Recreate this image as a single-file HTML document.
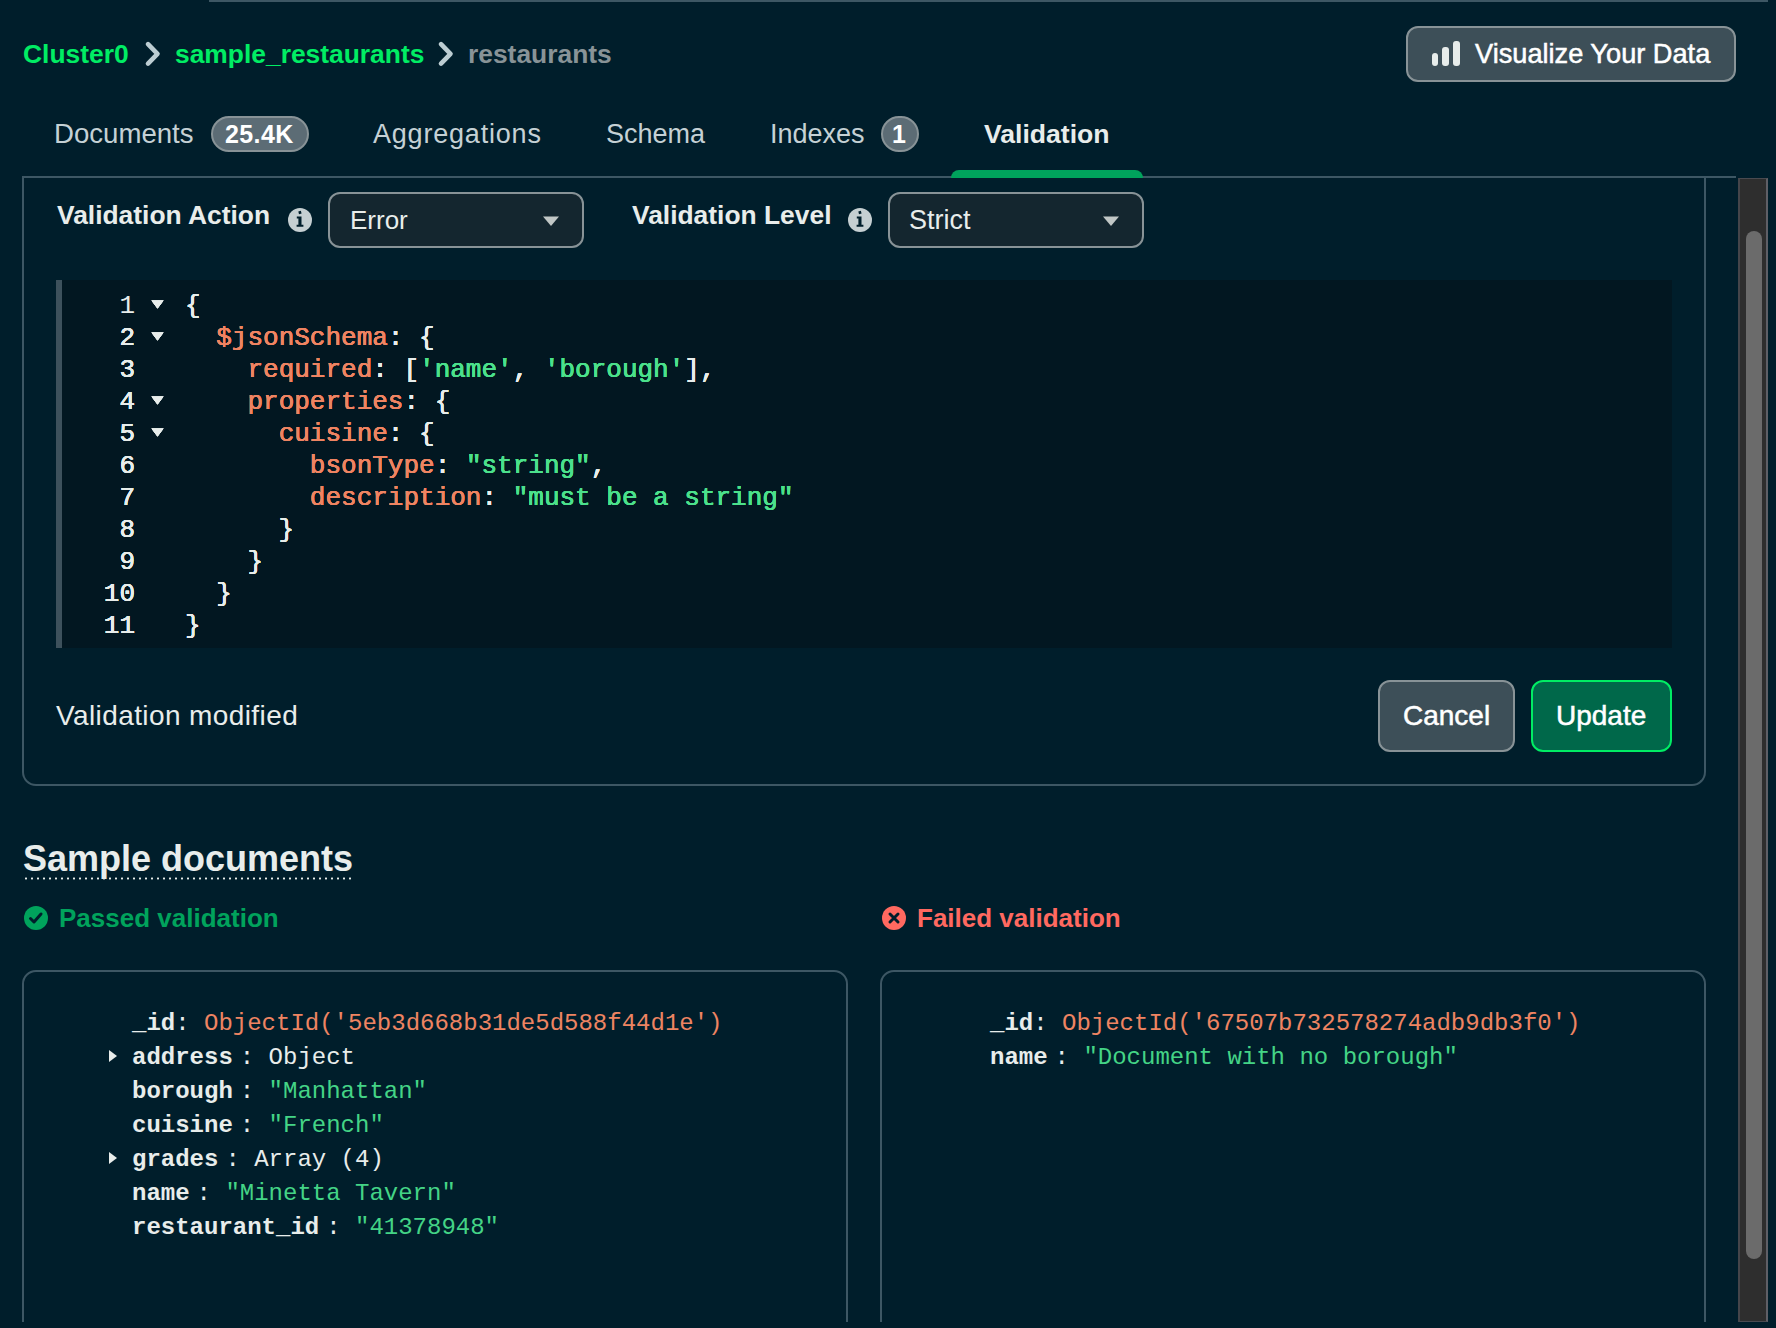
<!DOCTYPE html>
<html><head><meta charset="utf-8">
<style>
html,body{margin:0;padding:0;}
body{width:1776px;height:1328px;background:#001E2B;position:relative;overflow:hidden;font-family:"Liberation Sans",sans-serif;}
.a{position:absolute;}
.t{position:absolute;white-space:pre;line-height:1;}
.b{font-weight:bold;}
.m{font-family:"Liberation Mono",monospace;white-space:pre;}
.orange{color:#EE8462;}
.green{color:#4CE08C;}
.lt{color:#E8EDEB;}
.green2{color:#44D486;}
</style></head>
<body>
<!-- top line -->
<div class="a" style="left:209px;top:0;width:1559px;height:2px;background:#3D5764"></div>

<!-- breadcrumb -->
<div class="t b" style="left:23px;top:41px;font-size:26.4px;color:#00ED64">Cluster0</div>
<svg class="a" style="left:143px;top:40px" width="20" height="28" viewBox="0 0 20 28"><path d="M5 4.2 L14.5 13.9 L5 23.6" fill="none" stroke="#BCCDD2" stroke-width="4.6" stroke-linecap="round" stroke-linejoin="round"/></svg>
<div class="t b" style="left:175px;top:41px;font-size:26.4px;color:#00ED64">sample_restaurants</div>
<svg class="a" style="left:436px;top:40px" width="20" height="28" viewBox="0 0 20 28"><path d="M5 4.2 L14.5 13.9 L5 23.6" fill="none" stroke="#BCCDD2" stroke-width="4.6" stroke-linecap="round" stroke-linejoin="round"/></svg>
<div class="t b" style="left:468px;top:41px;font-size:26.4px;color:#889397">restaurants</div>

<!-- visualize button -->
<div class="a" style="left:1406px;top:26px;width:326px;height:52px;border:2px solid #889397;border-radius:12px;background:#3D4F58"></div>
<div class="a" style="left:1432px;top:53px;width:6px;height:13px;border-radius:3px;background:#E8EDEB"></div>
<div class="a" style="left:1442px;top:47px;width:7px;height:19px;border-radius:3px;background:#E8EDEB"></div>
<div class="a" style="left:1453px;top:41px;width:7px;height:25px;border-radius:3px;background:#E8EDEB"></div>
<div class="t" style="left:1475px;top:40px;font-size:27.2px;color:#FFFFFF;-webkit-text-stroke:0.5px #FFFFFF">Visualize Your Data</div>

<!-- tabs -->
<div class="t" style="left:54px;top:120px;font-size:27.6px;color:#C5D1D5">Documents</div>
<div class="a" style="left:211px;top:116px;width:94px;height:32px;border:2px solid #889397;border-radius:18px;background:#5C6C75"></div>
<div class="t b" style="left:225px;top:122px;font-size:25px;letter-spacing:0.4px;color:#FFFFFF">25.4K</div>
<div class="t" style="left:373px;top:121px;font-size:27px;letter-spacing:0.8px;color:#C5D1D5">Aggregations</div>
<div class="t" style="left:606px;top:121px;font-size:27px;color:#C5D1D5">Schema</div>
<div class="t" style="left:770px;top:121px;font-size:27px;color:#C5D1D5">Indexes</div>
<div class="a" style="left:881px;top:116px;width:34px;height:32px;border:2px solid #889397;border-radius:18px;background:#5C6C75"></div>
<div class="t b" style="left:892px;top:122px;font-size:25px;color:#FFFFFF">1</div>
<div class="t b" style="left:984px;top:121px;font-size:26.6px;color:#E8EDEB">Validation</div>
<div class="a" style="left:22px;top:176px;width:1714px;height:2px;background:#3D5764"></div>
<div class="a" style="left:951px;top:170px;width:192px;height:8px;border-radius:8px 8px 0 0;background:#00A35C"></div>

<!-- panel -->
<div class="a" style="left:22px;top:176px;width:1680px;height:608px;border:2px solid #3D5764;border-top:none;border-radius:0 0 14px 14px;"></div>


<!-- action row -->
<div class="t b lt" style="left:57px;top:202px;font-size:26.4px">Validation Action</div>
<svg class="a" style="left:287px;top:207px" width="26" height="26" viewBox="0 0 26 26"><circle cx="13" cy="13" r="12" fill="#C5CFD2"/><path d="M11.3 4.6l2.6-0.8l0.7 2.6l-2.6 0.8z" fill="#001E2B"/><path d="M9.8 9.5h4.7v8.3h1.9v2h-6.8v-2h1.8v-6.3h-1.6z" fill="#001E2B"/></svg>
<div class="a" style="left:328px;top:192px;width:252px;height:52px;border:2px solid #889397;border-radius:12px;background:#14262F"></div>
<div class="t lt" style="left:350px;top:207px;font-size:26px">Error</div>
<svg class="a" style="left:542px;top:215px" width="18" height="12" viewBox="0 0 18 12"><path d="M1 1.5h16l-8 9.5z" fill="#C1C7C6"/></svg>

<div class="t b lt" style="left:632px;top:202px;font-size:26.4px">Validation Level</div>
<svg class="a" style="left:847px;top:207px" width="26" height="26" viewBox="0 0 26 26"><circle cx="13" cy="13" r="12" fill="#C5CFD2"/><path d="M11.3 4.6l2.6-0.8l0.7 2.6l-2.6 0.8z" fill="#001E2B"/><path d="M9.8 9.5h4.7v8.3h1.9v2h-6.8v-2h1.8v-6.3h-1.6z" fill="#001E2B"/></svg>
<div class="a" style="left:888px;top:192px;width:252px;height:52px;border:2px solid #889397;border-radius:12px;background:#14262F"></div>
<div class="t lt" style="left:909px;top:207px;font-size:27px">Strict</div>
<svg class="a" style="left:1102px;top:215px" width="18" height="12" viewBox="0 0 18 12"><path d="M1 1.5h16l-8 9.5z" fill="#C1C7C6"/></svg>

<!-- editor -->
<div class="a" style="left:56px;top:280px;width:1616px;height:368px;background:#021721"></div>
<div class="a" style="left:56px;top:280px;width:6px;height:368px;background:#3D515C"></div>
<div id="ed">
<div class="t m" style="left:96px;top:290px;width:39px;text-align:right;font-size:26px;line-height:32px;color:#E8EDEB">1</div>
<svg class="a" style="left:151px;top:300px" width="13" height="9" viewBox="0 0 13 9"><path d="M0.5 0.5h12l-6 8z" fill="#E8EDEB"/></svg>
<div class="t m" style="left:185px;top:290px;font-size:26px;line-height:32px"><span class="lt">{</span></div>
<div class="t m" style="left:96px;top:322px;width:39px;text-align:right;font-size:26px;line-height:32px;color:#E8EDEB">2</div>
<svg class="a" style="left:151px;top:332px" width="13" height="9" viewBox="0 0 13 9"><path d="M0.5 0.5h12l-6 8z" fill="#E8EDEB"/></svg>
<div class="t m" style="left:185px;top:322px;font-size:26px;line-height:32px"><span class="lt">  </span><span class="orange">$jsonSchema</span><span class="lt">: {</span></div>
<div class="t m" style="left:96px;top:354px;width:39px;text-align:right;font-size:26px;line-height:32px;color:#E8EDEB">3</div>
<div class="t m" style="left:185px;top:354px;font-size:26px;line-height:32px"><span class="lt">    </span><span class="orange">required</span><span class="lt">: [</span><span class="green">'name'</span><span class="lt">, </span><span class="green">'borough'</span><span class="lt">],</span></div>
<div class="t m" style="left:96px;top:386px;width:39px;text-align:right;font-size:26px;line-height:32px;color:#E8EDEB">4</div>
<svg class="a" style="left:151px;top:396px" width="13" height="9" viewBox="0 0 13 9"><path d="M0.5 0.5h12l-6 8z" fill="#E8EDEB"/></svg>
<div class="t m" style="left:185px;top:386px;font-size:26px;line-height:32px"><span class="lt">    </span><span class="orange">properties</span><span class="lt">: {</span></div>
<div class="t m" style="left:96px;top:418px;width:39px;text-align:right;font-size:26px;line-height:32px;color:#E8EDEB">5</div>
<svg class="a" style="left:151px;top:428px" width="13" height="9" viewBox="0 0 13 9"><path d="M0.5 0.5h12l-6 8z" fill="#E8EDEB"/></svg>
<div class="t m" style="left:185px;top:418px;font-size:26px;line-height:32px"><span class="lt">      </span><span class="orange">cuisine</span><span class="lt">: {</span></div>
<div class="t m" style="left:96px;top:450px;width:39px;text-align:right;font-size:26px;line-height:32px;color:#E8EDEB">6</div>
<div class="t m" style="left:185px;top:450px;font-size:26px;line-height:32px"><span class="lt">        </span><span class="orange">bsonType</span><span class="lt">: </span><span class="green">"string"</span><span class="lt">,</span></div>
<div class="t m" style="left:96px;top:482px;width:39px;text-align:right;font-size:26px;line-height:32px;color:#E8EDEB">7</div>
<div class="t m" style="left:185px;top:482px;font-size:26px;line-height:32px"><span class="lt">        </span><span class="orange">description</span><span class="lt">: </span><span class="green">"must be a string"</span></div>
<div class="t m" style="left:96px;top:514px;width:39px;text-align:right;font-size:26px;line-height:32px;color:#E8EDEB">8</div>
<div class="t m" style="left:185px;top:514px;font-size:26px;line-height:32px"><span class="lt">      }</span></div>
<div class="t m" style="left:96px;top:546px;width:39px;text-align:right;font-size:26px;line-height:32px;color:#E8EDEB">9</div>
<div class="t m" style="left:185px;top:546px;font-size:26px;line-height:32px"><span class="lt">    }</span></div>
<div class="t m" style="left:96px;top:578px;width:39px;text-align:right;font-size:26px;line-height:32px;color:#E8EDEB">10</div>
<div class="t m" style="left:185px;top:578px;font-size:26px;line-height:32px"><span class="lt">  }</span></div>
<div class="t m" style="left:96px;top:610px;width:39px;text-align:right;font-size:26px;line-height:32px;color:#E8EDEB">11</div>
<div class="t m" style="left:185px;top:610px;font-size:26px;line-height:32px"><span class="lt">}</span></div>
</div>
<svg class="a" style="left:151px;top:300px" width="13" height="9" viewBox="0 0 13 9"><path d="M0.5 0.5h12l-6 8z" fill="#E8EDEB"/></svg>
<div class="t m" style="left:185px;top:290px;font-size:26px;line-height:32px"><span class="lt">{</span></div>
<div class="t m" style="left:96px;top:322px;width:39px;text-align:right;font-size:26px;line-height:32px;color:#E8EDEB">2</div>
<svg class="a" style="left:151px;top:332px" width="13" height="9" viewBox="0 0 13 9"><path d="M0.5 0.5h12l-6 8z" fill="#E8EDEB"/></svg>
<div class="t m" style="left:185px;top:322px;font-size:26px;line-height:32px"><span class="lt">  </span><span class="orange">$jsonSchema</span><span class="lt">: {</span></div>
<div class="t m" style="left:96px;top:354px;width:39px;text-align:right;font-size:26px;line-height:32px;color:#E8EDEB">3</div>
<div class="t m" style="left:185px;top:354px;font-size:26px;line-height:32px"><span class="lt">    </span><span class="orange">required</span><span class="lt">: [</span><span class="green">'name'</span><span class="lt">, </span><span class="green">'borough'</span><span class="lt">],</span></div>
<div class="t m" style="left:96px;top:386px;width:39px;text-align:right;font-size:26px;line-height:32px;color:#E8EDEB">4</div>
<svg class="a" style="left:151px;top:396px" width="13" height="9" viewBox="0 0 13 9"><path d="M0.5 0.5h12l-6 8z" fill="#E8EDEB"/></svg>
<div class="t m" style="left:185px;top:386px;font-size:26px;line-height:32px"><span class="lt">    </span><span class="orange">properties</span><span class="lt">: {</span></div>
<div class="t m" style="left:96px;top:418px;width:39px;text-align:right;font-size:26px;line-height:32px;color:#E8EDEB">5</div>
<svg class="a" style="left:151px;top:428px" width="13" height="9" viewBox="0 0 13 9"><path d="M0.5 0.5h12l-6 8z" fill="#E8EDEB"/></svg>
<div class="t m" style="left:185px;top:418px;font-size:26px;line-height:32px"><span class="lt">      </span><span class="orange">cuisine</span><span class="lt">: {</span></div>
<div class="t m" style="left:96px;top:450px;width:39px;text-align:right;font-size:26px;line-height:32px;color:#E8EDEB">6</div>
<div class="t m" style="left:185px;top:450px;font-size:26px;line-height:32px"><span class="lt">        </span><span class="orange">bsonType</span><span class="lt">: </span><span class="green">"string"</span><span class="lt">,</span></div>
<div class="t m" style="left:96px;top:482px;width:39px;text-align:right;font-size:26px;line-height:32px;color:#E8EDEB">7</div>
<div class="t m" style="left:185px;top:482px;font-size:26px;line-height:32px"><span class="lt">        </span><span class="orange">description</span><span class="lt">: </span><span class="green">"must be a string"</span></div>
<div class="t m" style="left:96px;top:514px;width:39px;text-align:right;font-size:26px;line-height:32px;color:#E8EDEB">8</div>
<div class="t m" style="left:185px;top:514px;font-size:26px;line-height:32px"><span class="lt">      }</span></div>
<div class="t m" style="left:96px;top:546px;width:39px;text-align:right;font-size:26px;line-height:32px;color:#E8EDEB">9</div>
<div class="t m" style="left:185px;top:546px;font-size:26px;line-height:32px"><span class="lt">    }</span></div>
<div class="t m" style="left:96px;top:578px;width:39px;text-align:right;font-size:26px;line-height:32px;color:#E8EDEB">10</div>
<div class="t m" style="left:185px;top:578px;font-size:26px;line-height:32px"><span class="lt">  }</span></div>
<div class="t m" style="left:96px;top:610px;width:39px;text-align:right;font-size:26px;line-height:32px;color:#E8EDEB">11</div>
<div class="t m" style="left:185px;top:610px;font-size:26px;line-height:32px"><span class="lt">}</span></div>
</div>
<svg class="a" style="left:151px;top:300px" width="13" height="9" viewBox="0 0 13 9"><path d="M0.5 0.5h12l-6 8z" fill="#E8EDEB"/></svg>
<div class="t m" style="left:185px;top:290px;font-size:26px;line-height:32px"><span class="lt">{</span></div>
<div class="t m" style="left:96px;top:322px;width:39px;text-align:right;font-size:26px;line-height:32px;color:#E8EDEB">2</div>
<svg class="a" style="left:151px;top:332px" width="13" height="9" viewBox="0 0 13 9"><path d="M0.5 0.5h12l-6 8z" fill="#E8EDEB"/></svg>
<div class="t m" style="left:185px;top:322px;font-size:26px;line-height:32px"><span class="lt">  </span><span class="orange">$jsonSchema</span><span class="lt">: {</span></div>
<div class="t m" style="left:96px;top:354px;width:39px;text-align:right;font-size:26px;line-height:32px;color:#E8EDEB">3</div>
<div class="t m" style="left:185px;top:354px;font-size:26px;line-height:32px"><span class="lt">    </span><span class="orange">required</span><span class="lt">: [</span><span class="green">'name'</span><span class="lt">, </span><span class="green">'borough'</span><span class="lt">],</span></div>
<div class="t m" style="left:96px;top:386px;width:39px;text-align:right;font-size:26px;line-height:32px;color:#E8EDEB">4</div>
<svg class="a" style="left:151px;top:396px" width="13" height="9" viewBox="0 0 13 9"><path d="M0.5 0.5h12l-6 8z" fill="#E8EDEB"/></svg>
<div class="t m" style="left:185px;top:386px;font-size:26px;line-height:32px"><span class="lt">    </span><span class="orange">properties</span><span class="lt">: {</span></div>
<div class="t m" style="left:96px;top:418px;width:39px;text-align:right;font-size:26px;line-height:32px;color:#E8EDEB">5</div>
<svg class="a" style="left:151px;top:428px" width="13" height="9" viewBox="0 0 13 9"><path d="M0.5 0.5h12l-6 8z" fill="#E8EDEB"/></svg>
<div class="t m" style="left:185px;top:418px;font-size:26px;line-height:32px"><span class="lt">      </span><span class="orange">cuisine</span><span class="lt">: {</span></div>
<div class="t m" style="left:96px;top:450px;width:39px;text-align:right;font-size:26px;line-height:32px;color:#E8EDEB">6</div>
<div class="t m" style="left:185px;top:450px;font-size:26px;line-height:32px"><span class="lt">        </span><span class="orange">bsonType</span><span class="lt">: </span><span class="green">"string"</span><span class="lt">,</span></div>
<div class="t m" style="left:96px;top:482px;width:39px;text-align:right;font-size:26px;line-height:32px;color:#E8EDEB">7</div>
<div class="t m" style="left:185px;top:482px;font-size:26px;line-height:32px"><span class="lt">        </span><span class="orange">description</span><span class="lt">: </span><span class="green">"must be a string"</span></div>
<div class="t m" style="left:96px;top:514px;width:39px;text-align:right;font-size:26px;line-height:32px;color:#E8EDEB">8</div>
<div class="t m" style="left:185px;top:514px;font-size:26px;line-height:32px"><span class="lt">      }</span></div>
<div class="t m" style="left:96px;top:546px;width:39px;text-align:right;font-size:26px;line-height:32px;color:#E8EDEB">9</div>
<div class="t m" style="left:185px;top:546px;font-size:26px;line-height:32px"><span class="lt">    }</span></div>
<div class="t m" style="left:96px;top:578px;width:39px;text-align:right;font-size:26px;line-height:32px;color:#E8EDEB">10</div>
<div class="t m" style="left:185px;top:578px;font-size:26px;line-height:32px"><span class="lt">  }</span></div>
<div class="t m" style="left:96px;top:610px;width:39px;text-align:right;font-size:26px;line-height:32px;color:#E8EDEB">11</div>
<div class="t m" style="left:185px;top:610px;font-size:26px;line-height:32px"><span class="lt">}</span></div>
</div>
<svg class="a" style="left:151px;top:300px" width="13" height="9" viewBox="0 0 13 9"><path d="M0.5 0.5h12l-6 8z" fill="#E8EDEB"/></svg>
<div class="t m" style="left:185px;top:290px;font-size:26px;line-height:32px"><span class="lt">{</span></div>
<div class="t m" style="left:96px;top:322px;width:39px;text-align:right;font-size:26px;line-height:32px;color:#E8EDEB">2</div>
<svg class="a" style="left:151px;top:332px" width="13" height="9" viewBox="0 0 13 9"><path d="M0.5 0.5h12l-6 8z" fill="#E8EDEB"/></svg>
<div class="t m" style="left:185px;top:322px;font-size:26px;line-height:32px"><span class="lt">  </span><span class="orange">$jsonSchema</span><span class="lt">: {</span></div>
<div class="t m" style="left:96px;top:354px;width:39px;text-align:right;font-size:26px;line-height:32px;color:#E8EDEB">3</div>
<div class="t m" style="left:185px;top:354px;font-size:26px;line-height:32px"><span class="lt">    </span><span class="orange">required</span><span class="lt">: [</span><span class="green">'name'</span><span class="lt">, </span><span class="green">'borough'</span><span class="lt">],</span></div>
<div class="t m" style="left:96px;top:386px;width:39px;text-align:right;font-size:26px;line-height:32px;color:#E8EDEB">4</div>
<svg class="a" style="left:151px;top:396px" width="13" height="9" viewBox="0 0 13 9"><path d="M0.5 0.5h12l-6 8z" fill="#E8EDEB"/></svg>
<div class="t m" style="left:185px;top:386px;font-size:26px;line-height:32px"><span class="lt">    </span><span class="orange">properties</span><span class="lt">: {</span></div>
<div class="t m" style="left:96px;top:418px;width:39px;text-align:right;font-size:26px;line-height:32px;color:#E8EDEB">5</div>
<svg class="a" style="left:151px;top:428px" width="13" height="9" viewBox="0 0 13 9"><path d="M0.5 0.5h12l-6 8z" fill="#E8EDEB"/></svg>
<div class="t m" style="left:185px;top:418px;font-size:26px;line-height:32px"><span class="lt">      </span><span class="orange">cuisine</span><span class="lt">: {</span></div>
<div class="t m" style="left:96px;top:450px;width:39px;text-align:right;font-size:26px;line-height:32px;color:#E8EDEB">6</div>
<div class="t m" style="left:185px;top:450px;font-size:26px;line-height:32px"><span class="lt">        </span><span class="orange">bsonType</span><span class="lt">: </span><span class="green">"string"</span><span class="lt">,</span></div>
<div class="t m" style="left:96px;top:482px;width:39px;text-align:right;font-size:26px;line-height:32px;color:#E8EDEB">7</div>
<div class="t m" style="left:185px;top:482px;font-size:26px;line-height:32px"><span class="lt">        </span><span class="orange">description</span><span class="lt">: </span><span class="green">"must be a string"</span></div>
<div class="t m" style="left:96px;top:514px;width:39px;text-align:right;font-size:26px;line-height:32px;color:#E8EDEB">8</div>
<div class="t m" style="left:185px;top:514px;font-size:26px;line-height:32px"><span class="lt">      }</span></div>
<div class="t m" style="left:96px;top:546px;width:39px;text-align:right;font-size:26px;line-height:32px;color:#E8EDEB">9</div>
<div class="t m" style="left:185px;top:546px;font-size:26px;line-height:32px"><span class="lt">    }</span></div>
<div class="t m" style="left:96px;top:578px;width:39px;text-align:right;font-size:26px;line-height:32px;color:#E8EDEB">10</div>
<div class="t m" style="left:185px;top:578px;font-size:26px;line-height:32px"><span class="lt">  }</span></div>
<div class="t m" style="left:96px;top:610px;width:39px;text-align:right;font-size:26px;line-height:32px;color:#E8EDEB">11</div>
<div class="t m" style="left:185px;top:610px;font-size:26px;line-height:32px"><span class="lt">}</span></div>
</div>
<svg class="a" style="left:151px;top:300px" width="13" height="9" viewBox="0 0 13 9"><path d="M0.5 0.5h12l-6 8z" fill="#E8EDEB"/></svg>
<div class="t m" style="left:185px;top:290px;font-size:26px;line-height:32px"><span class="lt">{</span></div>
<div class="t m" style="left:96px;top:322px;width:39px;text-align:right;font-size:26px;line-height:32px;color:#E8EDEB">2</div>
<svg class="a" style="left:151px;top:332px" width="13" height="9" viewBox="0 0 13 9"><path d="M0.5 0.5h12l-6 8z" fill="#E8EDEB"/></svg>
<div class="t m" style="left:185px;top:322px;font-size:26px;line-height:32px"><span class="lt">  </span><span class="orange">$jsonSchema</span><span class="lt">: {</span></div>
<div class="t m" style="left:96px;top:354px;width:39px;text-align:right;font-size:26px;line-height:32px;color:#E8EDEB">3</div>
<div class="t m" style="left:185px;top:354px;font-size:26px;line-height:32px"><span class="lt">    </span><span class="orange">required</span><span class="lt">: [</span><span class="green">'name'</span><span class="lt">, </span><span class="green">'borough'</span><span class="lt">],</span></div>
<div class="t m" style="left:96px;top:386px;width:39px;text-align:right;font-size:26px;line-height:32px;color:#E8EDEB">4</div>
<svg class="a" style="left:151px;top:396px" width="13" height="9" viewBox="0 0 13 9"><path d="M0.5 0.5h12l-6 8z" fill="#E8EDEB"/></svg>
<div class="t m" style="left:185px;top:386px;font-size:26px;line-height:32px"><span class="lt">    </span><span class="orange">properties</span><span class="lt">: {</span></div>
<div class="t m" style="left:96px;top:418px;width:39px;text-align:right;font-size:26px;line-height:32px;color:#E8EDEB">5</div>
<svg class="a" style="left:151px;top:428px" width="13" height="9" viewBox="0 0 13 9"><path d="M0.5 0.5h12l-6 8z" fill="#E8EDEB"/></svg>
<div class="t m" style="left:185px;top:418px;font-size:26px;line-height:32px"><span class="lt">      </span><span class="orange">cuisine</span><span class="lt">: {</span></div>
<div class="t m" style="left:96px;top:450px;width:39px;text-align:right;font-size:26px;line-height:32px;color:#E8EDEB">6</div>
<div class="t m" style="left:185px;top:450px;font-size:26px;line-height:32px"><span class="lt">        </span><span class="orange">bsonType</span><span class="lt">: </span><span class="green">"string"</span><span class="lt">,</span></div>
<div class="t m" style="left:96px;top:482px;width:39px;text-align:right;font-size:26px;line-height:32px;color:#E8EDEB">7</div>
<div class="t m" style="left:185px;top:482px;font-size:26px;line-height:32px"><span class="lt">        </span><span class="orange">description</span><span class="lt">: </span><span class="green">"must be a string"</span></div>
<div class="t m" style="left:96px;top:514px;width:39px;text-align:right;font-size:26px;line-height:32px;color:#E8EDEB">8</div>
<div class="t m" style="left:185px;top:514px;font-size:26px;line-height:32px"><span class="lt">      }</span></div>
<div class="t m" style="left:96px;top:546px;width:39px;text-align:right;font-size:26px;line-height:32px;color:#E8EDEB">9</div>
<div class="t m" style="left:185px;top:546px;font-size:26px;line-height:32px"><span class="lt">    }</span></div>
<div class="t m" style="left:96px;top:578px;width:39px;text-align:right;font-size:26px;line-height:32px;color:#E8EDEB">10</div>
<div class="t m" style="left:185px;top:578px;font-size:26px;line-height:32px"><span class="lt">  }</span></div>
<div class="t m" style="left:96px;top:610px;width:39px;text-align:right;font-size:26px;line-height:32px;color:#E8EDEB">11</div>
<div class="t m" style="left:185px;top:610px;font-size:26px;line-height:32px"><span class="lt">}</span></div>
</div>

<!-- footer -->
<div class="t lt" style="left:56px;top:702px;font-size:28px;letter-spacing:0.4px">Validation modified</div>
<div class="a" style="left:1378px;top:680px;width:133px;height:68px;border:2px solid #889397;border-radius:12px;background:#3D4F58"></div>
<div class="t" style="left:1403px;top:702px;font-size:28px;color:#FFFFFF;-webkit-text-stroke:0.5px #FFFFFF">Cancel</div>
<div class="a" style="left:1531px;top:680px;width:137px;height:68px;border:2px solid #00ED64;border-radius:12px;background:#00684A"></div>
<div class="t" style="left:1556px;top:702px;font-size:28px;color:#FFFFFF;-webkit-text-stroke:0.5px #FFFFFF">Update</div>

<!-- sample documents -->
<div class="t b lt" style="left:23px;top:841px;font-size:36px">Sample documents</div>
<div class="a" style="left:23px;top:877px;width:330px;height:3px;background-image:radial-gradient(circle,#E8EDEB 1px,transparent 1.2px);background-size:6px 3px"></div>
<svg class="a" style="left:24px;top:906px" width="24" height="24" viewBox="0 0 24 24"><circle cx="12" cy="12" r="12" fill="#00A35C"/><path d="M6.5 12.5l3.5 3.5l7-8" fill="none" stroke="#001E2B" stroke-width="3" stroke-linecap="round" stroke-linejoin="round"/></svg>
<div class="t b" style="left:59px;top:905px;font-size:26px;color:#00A35C">Passed validation</div>
<svg class="a" style="left:882px;top:906px" width="24" height="24" viewBox="0 0 24 24"><circle cx="12" cy="12" r="12" fill="#FF6960"/><path d="M8 8l8 8M16 8l-8 8" fill="none" stroke="#001E2B" stroke-width="3" stroke-linecap="round"/></svg>
<div class="t b" style="left:917px;top:905px;font-size:26px;color:#FF6960">Failed validation</div>

<!-- doc cards -->
<div class="a" style="left:22px;top:970px;width:822px;height:400px;border:2px solid #3D5764;border-radius:14px;"></div>
<div class="a" style="left:880px;top:970px;width:822px;height:400px;border:2px solid #3D5764;border-radius:14px;"></div>
<div id="docs">
<div class="t m b" style="left:132px;top:1007px;font-size:24px;line-height:34px;color:#E8EDEB">_id</div>
<div class="t m" style="left:175.2px;top:1007px;font-size:24px;line-height:34px;color:#E8EDEB">:</div>
<div class="t m orange" style="left:204.0px;top:1007px;font-size:24px;line-height:34px">ObjectId('5eb3d668b31de5d588f44d1e')</div>
<div class="t m b" style="left:132px;top:1041px;font-size:24px;line-height:34px;color:#E8EDEB">address</div>
<div class="t m" style="left:239.8px;top:1041px;font-size:24px;line-height:34px;color:#E8EDEB">:</div>
<div class="t m lt" style="left:268.6px;top:1041px;font-size:24px;line-height:34px">Object</div>
<svg class="a" style="left:108px;top:1049px" width="10" height="14" viewBox="0 0 10 14"><path d="M1 1v12l8-6z" fill="#E8EDEB"/></svg>
<div class="t m b" style="left:132px;top:1075px;font-size:24px;line-height:34px;color:#E8EDEB">borough</div>
<div class="t m" style="left:239.8px;top:1075px;font-size:24px;line-height:34px;color:#E8EDEB">:</div>
<div class="t m green2" style="left:268.6px;top:1075px;font-size:24px;line-height:34px">"Manhattan"</div>
<div class="t m b" style="left:132px;top:1109px;font-size:24px;line-height:34px;color:#E8EDEB">cuisine</div>
<div class="t m" style="left:239.8px;top:1109px;font-size:24px;line-height:34px;color:#E8EDEB">:</div>
<div class="t m green2" style="left:268.6px;top:1109px;font-size:24px;line-height:34px">"French"</div>
<div class="t m b" style="left:132px;top:1143px;font-size:24px;line-height:34px;color:#E8EDEB">grades</div>
<div class="t m" style="left:225.4px;top:1143px;font-size:24px;line-height:34px;color:#E8EDEB">:</div>
<div class="t m lt" style="left:254.2px;top:1143px;font-size:24px;line-height:34px">Array (4)</div>
<svg class="a" style="left:108px;top:1151px" width="10" height="14" viewBox="0 0 10 14"><path d="M1 1v12l8-6z" fill="#E8EDEB"/></svg>
<div class="t m b" style="left:132px;top:1177px;font-size:24px;line-height:34px;color:#E8EDEB">name</div>
<div class="t m" style="left:196.6px;top:1177px;font-size:24px;line-height:34px;color:#E8EDEB">:</div>
<div class="t m green2" style="left:225.4px;top:1177px;font-size:24px;line-height:34px">"Minetta Tavern"</div>
<div class="t m b" style="left:132px;top:1211px;font-size:24px;line-height:34px;color:#E8EDEB">restaurant_id</div>
<div class="t m" style="left:326.2px;top:1211px;font-size:24px;line-height:34px;color:#E8EDEB">:</div>
<div class="t m green2" style="left:355.0px;top:1211px;font-size:24px;line-height:34px">"41378948"</div>
<div class="t m b" style="left:990px;top:1007px;font-size:24px;line-height:34px;color:#E8EDEB">_id</div>
<div class="t m" style="left:1033.2px;top:1007px;font-size:24px;line-height:34px;color:#E8EDEB">:</div>
<div class="t m orange" style="left:1062.0px;top:1007px;font-size:24px;line-height:34px">ObjectId('67507b732578274adb9db3f0')</div>
<div class="t m b" style="left:990px;top:1041px;font-size:24px;line-height:34px;color:#E8EDEB">name</div>
<div class="t m" style="left:1054.6px;top:1041px;font-size:24px;line-height:34px;color:#E8EDEB">:</div>
<div class="t m green2" style="left:1083.4px;top:1041px;font-size:24px;line-height:34px">"Document with no borough"</div>
</div>

<!-- scrollbar -->
<div class="a" style="left:1738px;top:178px;width:30px;height:1144px;background:#2E2E2E;box-sizing:border-box;border-left:2px solid #45454a;border-right:2px solid #5f5f66;border-top:1px solid #4a4a50;border-bottom:1px solid #4a4a50"></div>
<div class="a" style="left:1746px;top:231px;width:16px;height:1028px;border-radius:8px;background:#6B6B6B"></div>

<div id="bstrip" class="a" style="left:0;top:1322px;width:1776px;height:6px;background:#001E2B"></div>
</body></html>
